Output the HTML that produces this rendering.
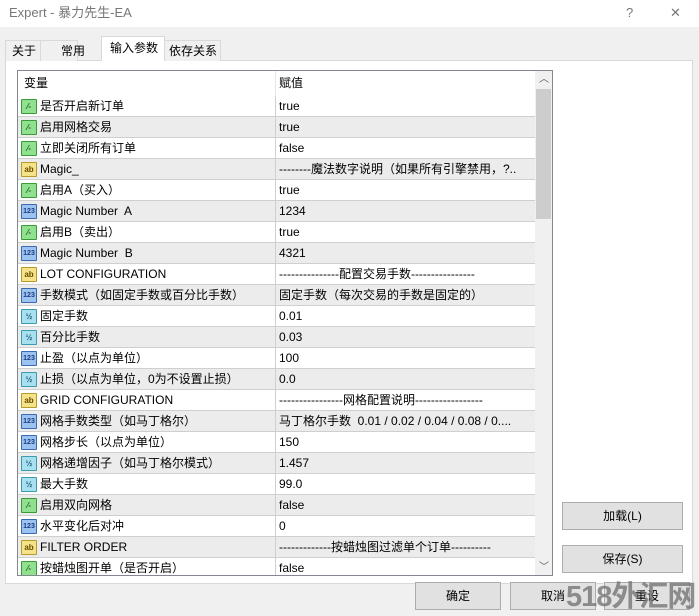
<!DOCTYPE html>
<html><head><meta charset="utf-8"><style>
*{margin:0;padding:0;box-sizing:border-box}
html,body{width:699px;height:616px;overflow:hidden}
body{background:#f0f0f0;font-family:"Liberation Sans","Noto Sans CJK SC",sans-serif;font-size:12px;line-height:14px;color:#000;position:relative}
.title{position:absolute;left:0;top:0;width:699px;height:27px;background:#fff}
.title span{position:absolute;left:9px;top:5px;font-size:13px;line-height:16px;color:#777}
.tb{position:absolute;top:3px;font-size:14px;color:#555}
.tab{position:absolute;top:40px;height:21px;border:1px solid #d9d9d9;border-bottom:none;background:#f0f0f0;padding:3px 0 0 6px;white-space:nowrap}
.tab.sel{top:36px;height:25px;background:#fff;padding-top:4px}
.panel{position:absolute;left:5px;top:60px;width:688px;height:524px;background:#fff;border:1px solid #d9d9d9}
.grid{position:absolute;left:17px;top:70px;width:536px;height:506px;border:1px solid #828790;overflow:hidden;background:#fff}
.row{position:absolute;left:0;width:518px;height:21px;border-bottom:1px solid #cfcfcf}
.row.g{background:#ececec}
.c1{position:absolute;left:0;top:0;width:258px;height:21px;border-right:1px solid #cfcfcf;padding:3px 0 0 22px;white-space:pre;overflow:hidden}
.c2{position:absolute;left:260px;top:0;padding:3px 0 0 1px;white-space:pre}
.hdr{position:absolute;left:0;top:0;width:518px;height:25px;background:#fff}
.hdr .c1{height:25px;padding:5px 0 0 6px;border-right:1px solid #e5e5e5}
.hdr .c2{padding-top:5px}
.ic{position:absolute;left:3px;top:3px;width:16px;height:15px;border:1px solid;border-radius:1px;font-size:8px;line-height:13px;text-align:center;font-weight:bold}
.bool{background:#8fe08f;border-color:#3a9a3a;color:#1a5a1a}
.ab{background:#f5e38a;border-color:#b89a2a;color:#6a4a00}
.n{background:#9cc3f0;border-color:#3a6ab0;color:#1a3a80;font-size:7px}
.v{background:#a8e0f0;border-color:#3a9ab0;color:#1a5a80}
.sb{position:absolute;left:517px;top:0;width:17px;height:506px;background:#f0f0f0}
.thumb{position:absolute;left:1px;top:18px;width:15px;height:130px;background:#cdcdcd}
.btn{position:absolute;height:28px;background:#e1e1e1;border:1px solid #adadad;text-align:center;padding-top:6px;white-space:nowrap}
.wm{position:absolute;left:566px;top:580px;font-size:29px;line-height:34px;font-weight:bold;color:rgba(110,110,110,.75);letter-spacing:-1px;white-space:nowrap}
</style></head><body>
<div class="title"><span>Expert - 暴力先生-EA</span><span class="tb" style="left:626px">?</span><span class="tb" style="left:670px">✕</span></div>
<div class="panel"></div>
<div class="tab" style="left:5px;width:36px">关于</div>
<div class="tab" style="left:40px;width:38px;padding-left:20px">常用</div>
<div class="tab" style="left:164px;width:57px;padding-left:4px">依存关系</div>
<div class="tab sel" style="left:101px;width:64px;padding-left:8px">输入参数</div>
<div class="grid">
<div class="hdr"><div class="c1">变量</div><div class="c2">赋值</div></div>
<div id="rows"></div>
<div class="sb"><div style="position:absolute;left:4px;top:2px;font-size:10px;color:#555">︿</div><div class="thumb"></div><div style="position:absolute;left:4px;top:490px;font-size:10px;color:#555">﹀</div></div>
</div>
<div class="btn" style="left:562px;top:502px;width:121px">加载(L)</div>
<div class="btn" style="left:562px;top:545px;width:121px">保存(S)</div>
<div class="btn" style="left:415px;top:582px;width:86px">确定</div>
<div class="btn" style="left:510px;top:582px;width:86px">取消</div>
<div class="btn" style="left:604px;top:582px;width:86px">重设</div>
<div class="wm">518外汇网</div>
<script>
var R=[["bool","是否开启新订单","true"],["bool","启用网格交易","true"],["bool","立即关闭所有订单","false"],["ab","Magic_","--------魔法数字说明（如果所有引擎禁用，?.."],["bool","启用A（买入）","true"],["n","Magic Number  A","1234"],["bool","启用B（卖出）","true"],["n","Magic Number  B","4321"],["ab","LOT CONFIGURATION","---------------配置交易手数----------------"],["n","手数模式（如固定手数或百分比手数）","固定手数（每次交易的手数是固定的）"],["v","固定手数","0.01"],["v","百分比手数","0.03"],["n","止盈（以点为单位）","100"],["v","止损（以点为单位，0为不设置止损）","0.0"],["ab","GRID CONFIGURATION","----------------网格配置说明-----------------"],["n","网格手数类型（如马丁格尔）","马丁格尔手数  0.01 / 0.02 / 0.04 / 0.08 / 0...."],["n","网格步长（以点为单位）","150"],["v","网格递增因子（如马丁格尔模式）","1.457"],["v","最大手数","99.0"],["bool","启用双向网格","false"],["n","水平变化后对冲","0"],["ab","FILTER ORDER","-------------按蜡烛图过滤单个订单----------"],["bool","按蜡烛图开单（是否开启）","false"]];
var L={bool:"⁄-",ab:"ab",n:"123",v:"½"};var h="";
R.forEach(function(r,i){h+='<div class="row'+(i%2?' g':'')+'" style="top:'+(25+i*21)+'px"><div class="c1"><div class="ic '+r[0]+'">'+L[r[0]]+'</div>'+r[1]+'</div><div class="c2">'+r[2]+'</div></div>';});
document.getElementById("rows").innerHTML=h;
</script>
</body></html>
